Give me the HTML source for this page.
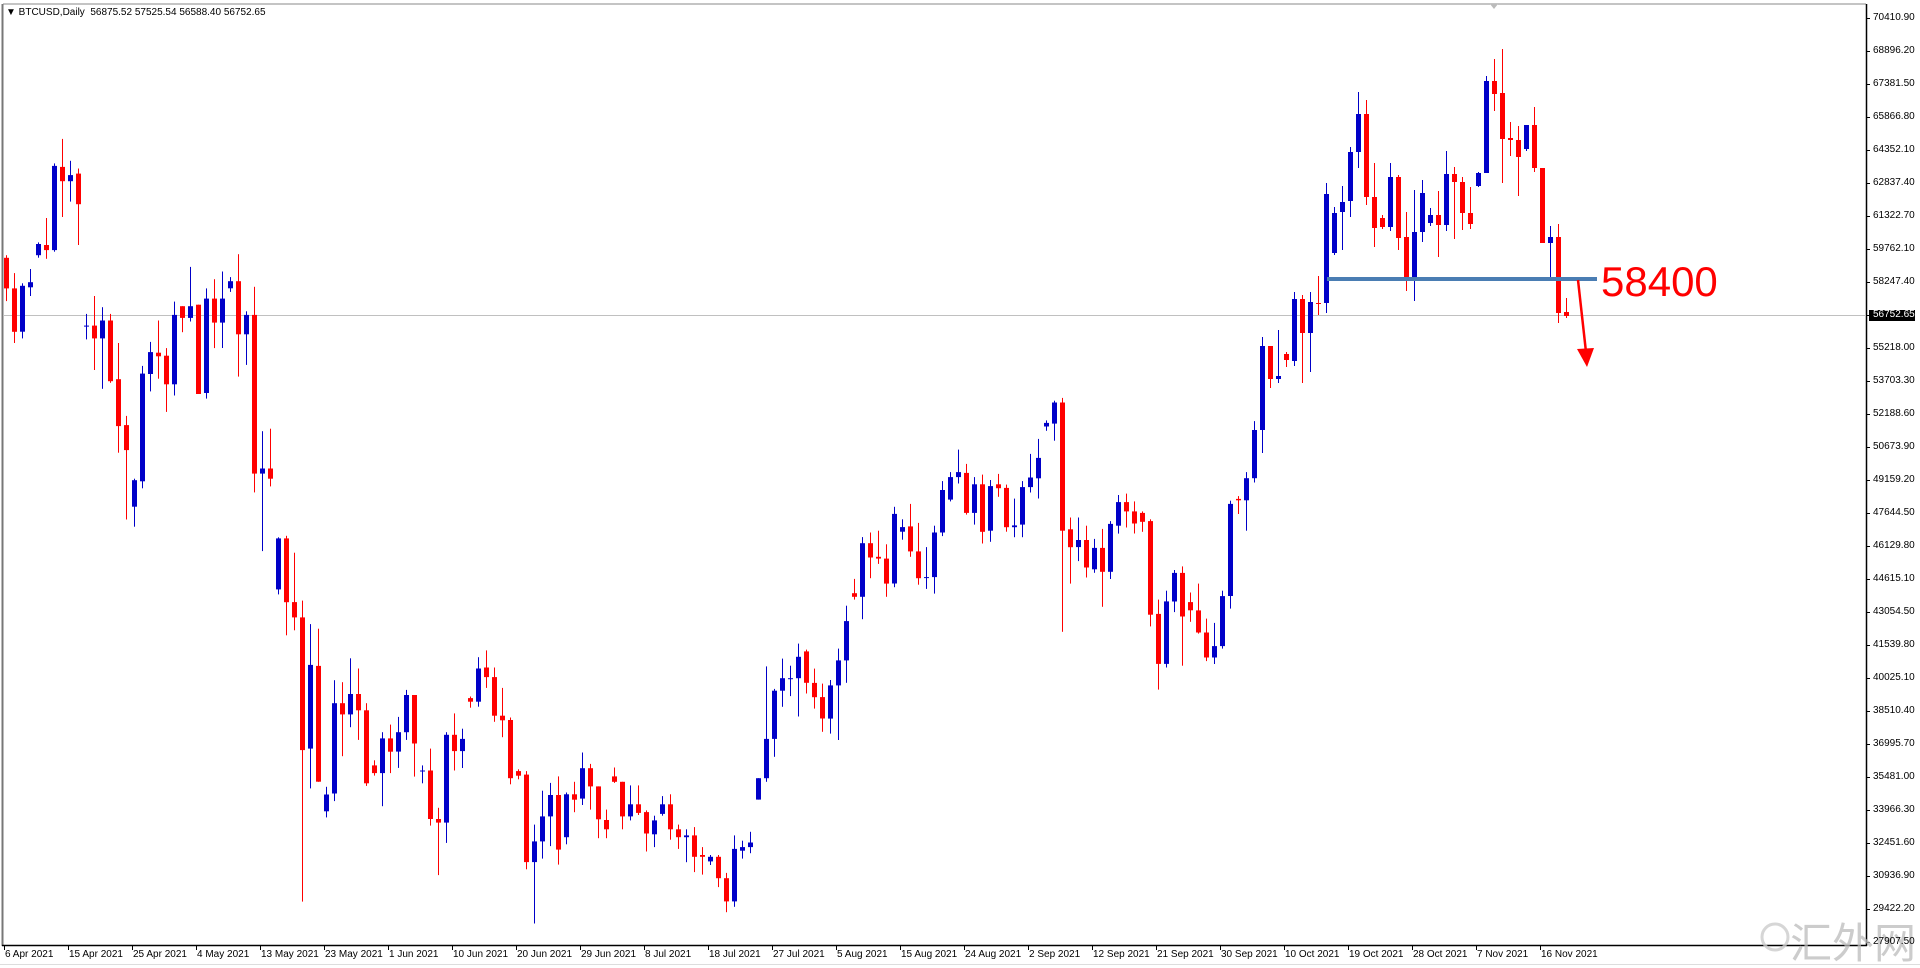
<!DOCTYPE html>
<html><head><meta charset="utf-8"><style>
html,body{margin:0;padding:0;background:#fff;}
body{width:1920px;height:968px;position:relative;overflow:hidden;font-family:"Liberation Sans",Tahoma,sans-serif;}
.pl{position:absolute;left:1873px;font-size:10px;color:#000;line-height:12px;}
.dl{position:absolute;top:949px;font-size:10px;color:#000;white-space:nowrap;}
</style></head><body>
<svg id="s" width="1920" height="968" style="position:absolute;left:0;top:0">
<rect x="0" y="0" width="1920" height="968" fill="#fff"/>
<line x1="3" y1="4" x2="1866" y2="4" stroke="#888" stroke-width="1"/>
<line x1="2.5" y1="4" x2="2.5" y2="946" stroke="#777" stroke-width="2"/>
<line x1="1866.5" y1="4" x2="1866.5" y2="946" stroke="#000" stroke-width="1.5"/>
<line x1="2" y1="945.5" x2="1867" y2="945.5" stroke="#000" stroke-width="1.5"/>
<line x1="0" y1="964.5" x2="1920" y2="964.5" stroke="#ddd" stroke-width="1"/>
<line x1="3" y1="315.5" x2="1866" y2="315.5" stroke="#c0c0c0" stroke-width="1"/>
<path d="M1490 4 L1498 4 L1494 9 Z" fill="#bbb"/>
<g id="ticks"></g>
<g id="c"></g>
<line x1="1327" y1="279" x2="1597" y2="279" stroke="#4a7db3" stroke-width="4"/>
<line x1="1578" y1="280" x2="1586" y2="352" stroke="#f00" stroke-width="2.5"/>
<path d="M1577 349 L1594 348 L1587 367 Z" fill="#f00"/>
<text x="1601" y="296" font-family="Liberation Sans, sans-serif" font-size="42" fill="#f00">58400</text>
<rect x="1869" y="310" width="46" height="11" fill="#000"/>
<g fill="none" stroke="#ccc" stroke-width="3" opacity="0.8"><circle cx="1775" cy="937" r="13"/></g>
<text x="1790" y="958" font-family="Noto Sans CJK SC, sans-serif" font-size="42" fill="#bbb" opacity="0.75">汇外网</text>
</svg>
<div style="position:absolute;left:6px;top:6px;font-size:10px;line-height:13px;white-space:nowrap;">&#9660; BTCUSD,Daily&nbsp; 56875.52 57525.54 56588.40 56752.65</div>
<div id="pls">
<div class="pl" style="top:12px">70410.90</div>
<div class="pl" style="top:45px">68896.20</div>
<div class="pl" style="top:78px">67381.50</div>
<div class="pl" style="top:111px">65866.80</div>
<div class="pl" style="top:144px">64352.10</div>
<div class="pl" style="top:177px">62837.40</div>
<div class="pl" style="top:210px">61322.70</div>
<div class="pl" style="top:243px">59762.10</div>
<div class="pl" style="top:276px">58247.40</div>
<div class="pl" style="top:309px;color:#fff">56752.65</div>
<div class="pl" style="top:342px">55218.00</div>
<div class="pl" style="top:375px">53703.30</div>
<div class="pl" style="top:408px">52188.60</div>
<div class="pl" style="top:441px">50673.90</div>
<div class="pl" style="top:474px">49159.20</div>
<div class="pl" style="top:507px">47644.50</div>
<div class="pl" style="top:540px">46129.80</div>
<div class="pl" style="top:573px">44615.10</div>
<div class="pl" style="top:606px">43054.50</div>
<div class="pl" style="top:639px">41539.80</div>
<div class="pl" style="top:672px">40025.10</div>
<div class="pl" style="top:705px">38510.40</div>
<div class="pl" style="top:738px">36995.70</div>
<div class="pl" style="top:771px">35481.00</div>
<div class="pl" style="top:804px">33966.30</div>
<div class="pl" style="top:837px">32451.60</div>
<div class="pl" style="top:870px">30936.90</div>
<div class="pl" style="top:903px">29422.20</div>
<div class="pl" style="top:936px">27907.50</div>
</div>
<div class="dl" style="left:5px">6 Apr 2021</div>
<div class="dl" style="left:69px">15 Apr 2021</div>
<div class="dl" style="left:133px">25 Apr 2021</div>
<div class="dl" style="left:197px">4 May 2021</div>
<div class="dl" style="left:261px">13 May 2021</div>
<div class="dl" style="left:325px">23 May 2021</div>
<div class="dl" style="left:389px">1 Jun 2021</div>
<div class="dl" style="left:453px">10 Jun 2021</div>
<div class="dl" style="left:517px">20 Jun 2021</div>
<div class="dl" style="left:581px">29 Jun 2021</div>
<div class="dl" style="left:645px">8 Jul 2021</div>
<div class="dl" style="left:709px">18 Jul 2021</div>
<div class="dl" style="left:773px">27 Jul 2021</div>
<div class="dl" style="left:837px">5 Aug 2021</div>
<div class="dl" style="left:901px">15 Aug 2021</div>
<div class="dl" style="left:965px">24 Aug 2021</div>
<div class="dl" style="left:1029px">2 Sep 2021</div>
<div class="dl" style="left:1093px">12 Sep 2021</div>
<div class="dl" style="left:1157px">21 Sep 2021</div>
<div class="dl" style="left:1221px">30 Sep 2021</div>
<div class="dl" style="left:1285px">10 Oct 2021</div>
<div class="dl" style="left:1349px">19 Oct 2021</div>
<div class="dl" style="left:1413px">28 Oct 2021</div>
<div class="dl" style="left:1477px">7 Nov 2021</div>
<div class="dl" style="left:1541px">16 Nov 2021</div>
<script>
var A=[[270,330,265,355],[330,415,300,437],[415,325,320,428],[328,318,292,345],[265,243,240,270],[245,255,192,272],[255,90,85,258],[92,120,37,190],[120,108,80,160],[105,165,95,245],[403,403,380,430],[403,428,345,490],[428,393,367,527],[393,512,380,515],[508,600,437,652],[598,647,580,783],[758,706,703,797],[708,497,482,722],[498,455,435,532],[456,463,393,507],[462,518,447,572],[518,382,356,540],[365,388,365,416],[388,365,288,395],[362,537,362,537],[535,350,330,546],[350,397,312,447],[397,350,297,447],[330,316,308,337],[316,420,263,503],[420,382,375,480],[382,693,327,730],[693,683,610,845],[683,703,605,718],[920,820,818,930],[820,945,815,1010],[945,975,848,1000],[975,1235,942,1532],[1232,1068,988,1310],[1070,1297,997,1297],[1355,1322,1307,1367],[1320,1143,1098,1335],[1143,1165,1102,1247],[1165,1125,1055,1190],[1125,1157,1075,1215],[1157,1300,1143,1305],[1265,1280,1255,1285],[1280,1212,1200,1345],[1212,1238,1185,1280],[1238,1200,1170,1270],[1200,1127,1117,1215],[1127,1222,1127,1287],[1275,1275,1265,1300],[1275,1370,1232,1383],[1370,1377,1348,1480],[1377,1205,1200,1417],[1205,1237,1163,1275],[1237,1213,1193,1270],[1133,1140,1130,1152],[1140,1075,1053,1150]];
var B=[[805,832,757,862],[832,940,805,957],[940,953,862,1000],[952,1115,945,1132],[1095,1108,1090,1118],[1105,1350,1095,1370],[1350,1292,1245,1522],[1292,1222,1150,1340],[1222,1162,1128,1305],[1162,1315,1110,1357],[1280,1160,1155,1300],[1160,1175,1125,1210],[1172,1087,1043,1190],[1087,1138,1075,1203],[1138,1230,1138,1283],[1232,1258,1203,1283],[1110,1125,1085,1128],[1125,1222,1125,1258],[1222,1188,1135,1233],[1188,1212,1135,1218],[1210,1270,1205,1320],[1272,1233,1220,1308],[1215,1188,1165,1220],[1188,1258,1160,1287],[1258,1280,1245,1313],[1280,1275,1258,1350],[1275,1335,1252,1378],[1330,1335,1308,1385],[1348,1335,1330,1358],[1335,1395,1330,1420],[1395,1460,1380,1490],[1460,1313,1275,1475],[1318,1308,1290,1340],[1308,1295,1265,1325],[1175,1115,1115,1175],[1115,1005,802,1125],[1005,870,865,1055],[870,835,780,915],[835,835,800,885],[835,775,738,942],[760,848,755,878],[848,888,808,920],[888,948,850,985],[948,855,840,990],[855,785,752,1008],[785,675,632,848],[597,607,557,615],[607,457,440,670],[457,497,427,555],[495,500,422,515],[500,570,460,607],[570,375,355,580],[425,412,390,447],[410,480,347,495],[480,555,400,573],[552,552,468,585],[552,427,408,598],[427,308,283,437],
[335,272,258,340],[272,258,195,290],[260,372,235,377],[372,292,272,405],[292,425,265,458],[422,297,280,453],[292,303,263,327],[302,412,293,425],[412,407,332,440],[405,300,283,440],[300,273,207,315],[275,218,165,332],[130,120,113,142],[122,63,58,170],[63,422,50,705],[418,468,385,570],[468,448,385,507],[448,525,408,553],[530,470,445,540],[470,537,417,635],[537,403,395,557],[408,342,322,430],[342,368,318,413],[368,402,340,430],[372,397,368,425],[395,657,390,690],[655,795,615,867],[795,620,590,805],[620,540,532,650],[540,662,522,800],[622,645,595,677],[645,707,570,710],[707,777,668,787],[777,745,680,795],[745,605,590,752],[605,347,338,640],[333,337,325,375],[337,275,258,422],[275,140,115,287]];
var C=[[430,346,337,453],[346,379,346,388],[379,376,330,383],[354,360,352,367],[361,299,292,366],[299,333,295,383],[333,302,292,372],[303,303,276,315],[303,194,183,313],[253,213,207,255],[212,202,186,250],[201,152,147,217],[152,114,92,168],[114,197,100,205],[197,228,163,247],[218,227,215,229],[227,177,163,231],[177,238,175,250],[237,279,212,291],[279,232,190,301],[232,193,180,242],[223,215,208,226],[215,225,191,257],[225,174,151,231],[174,182,167,239],[182,213,177,230],[213,224,187,229],[186,173,172,187],[173,81,76,173],[81,94,59,111],[93,139,49,183],[138,140,122,156],[140,157,126,196],[149,125,125,151],[125,168,107,172],[168,243,168,243],[243,237,226,279],[237,313,224,323],[312,316,298,318]];
var all=[];
A.forEach(function(d){all.push(d.map(function(v){return 120+v/1.96;}));});
B.forEach(function(d){all.push(d.map(function(v){return 380+v/2.8;}));});
C.forEach(function(d){all.push(d);});
var h='';
all.forEach(function(d,i){
 var cx=6+8*i,o=d[0],c=d[1],hi=Math.min(d[2],o,c),lo=Math.max(d[3],o,c);
 var col=(c<o)?'#0000c8':'#ff0000';
 if(c===o){col=(i==10||i==52||i==98||i==115)?'#0000c8':col;}
 h+='<rect x="'+cx+'" y="'+hi.toFixed(1)+'" width="1" height="'+(lo-hi).toFixed(1)+'" fill="'+col+'"/>';
 var t=Math.min(o,c),bh=Math.max(Math.abs(o-c),1);
 h+='<rect x="'+(cx-2)+'" y="'+t.toFixed(1)+'" width="5" height="'+bh.toFixed(1)+'" fill="'+col+'"/>';
});
document.getElementById('c').innerHTML=h;
var tk='';
for(var k=0;k<=28;k++){var y=18+33*k;tk+='<line x1="1866" y1="'+(y+.5)+'" x2="1870" y2="'+(y+.5)+'" stroke="#000"/>';}
for(var k=0;k<25;k++){var x=4+64*k;tk+='<line x1="'+(x+.5)+'" y1="945" x2="'+(x+.5)+'" y2="950" stroke="#000"/>';}
document.getElementById('ticks').innerHTML=tk;
</script>
</body></html>
